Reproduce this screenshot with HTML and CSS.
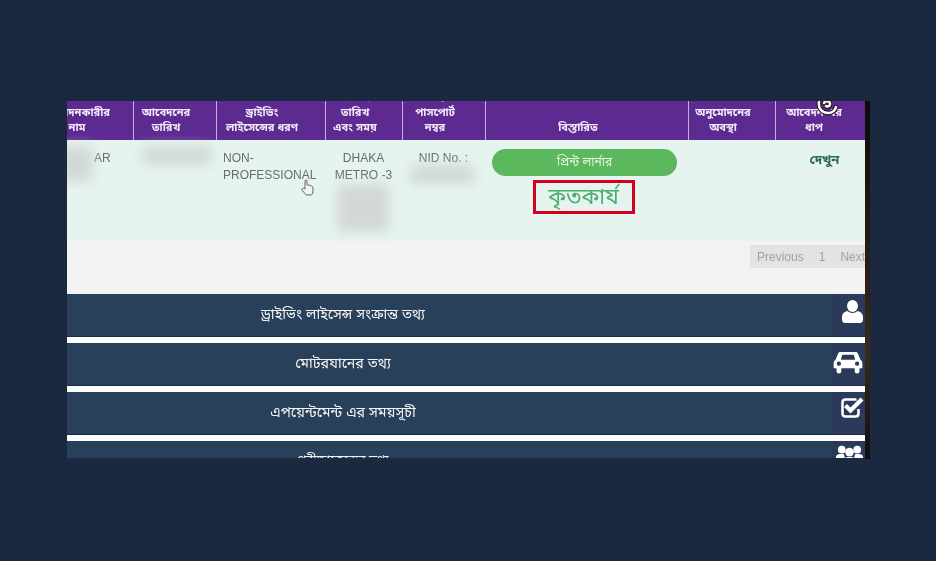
FILE: index.html
```html
<!DOCTYPE html>
<html lang="bn">
<head>
<meta charset="utf-8">
<title>Driving licence application</title>
<link rel="stylesheet" href="styles.css">
</head>
<body>
<main class="frame">
  <div class="table">
    <div class="grid head">
      <div class="th th-first">আবেদনকারীর<br>নাম</div>
      <div class="th">আবেদনের<br>তারিখ</div>
      <div class="th">ড্রাইভিং<br>লাইসেন্সের ধরণ</div>
      <div class="th">পরীক্ষার<br>তারিখ<br>এবং সময়</div>
      <div class="th">এনআইডি /<br>পাসপোর্ট<br>নম্বর</div>
      <div class="th">বিস্তারিত</div>
      <div class="th">অনুমোদনের<br>অবস্থা</div>
      <div class="th">আবেদন-এর<br>ধাপ</div>
    </div>
    <div class="grid row">
      <div class="td td-name"><span class="name-text">AR</span><span class="blur blur-name"></span></div>
      <div class="td"><span class="blur blur-date"></span></div>
      <div class="td td-type">NON-<br>PROFESSIONAL</div>
      <div class="td td-center">DHAKA<br>METRO -3<span class="blur blur-time"></span></div>
      <div class="td td-center">NID No. :<span class="blur blur-nid"></span></div>
      <div class="td td-detail">
        <button class="pill">প্রিন্ট লার্নার</button>
        <div class="success">কৃতকার্য</div>
      </div>
      <div class="td"></div>
      <div class="td td-see">দেখুন</div>
    </div>
  </div>
  <div class="pager-area">
    <div class="pager"><span>Previous</span><span>1</span><span>Next</span></div>
  </div>
  <section class="bar">
    <h2>ড্রাইভিং লাইসেন্স সংক্রান্ত তথ্য</h2>
    <svg class="icon icon-user" width="21" height="23" viewBox="0 0 21 23"><ellipse cx="10.500" cy="6" rx="5.500" ry="6" fill="#fff"/><path d="M0 20v-3c0-3 2.500-5.500 5.500-6 1.200 1.200 3 2 5 2s3.800-.8 5-2c3 .5 5.500 3 5.500 6v3c0 1.500-1 3-3 3H3c-2 0-3-1.500-3-3z" fill="#fff"/></svg>
  </section>
  <section class="bar">
    <h2>মোটরযানের তথ্য</h2>
    <svg class="icon icon-car" width="30" height="23" viewBox="0 0 30 24"><path fill-rule="evenodd" d="M7 1h16c1 0 2 .5 2.500 2L28 9c1.500 1 2 2.500 2 4v5h-3v3a2.500 2.500 0 0 1-5 0v-3H8v3a2.500 2.500 0 0 1-5 0v-3H0v-5c0-1.500.5-3 2-4l2.500-6C5 1.500 6 1 7 1zm2 3L7.500 9h15L21 4zM5.500 11a2 2 0 1 0 0 4.500 2 2 0 0 0 0-4.500zm19 0a2 2 0 1 0 0 4.500 2 2 0 0 0 0-4.500z" fill="#fff"/></svg>
  </section>
  <section class="bar">
    <h2>এপয়েন্টমেন্ট এর সময়সূচী</h2>
    <svg class="icon icon-check" width="23" height="21" viewBox="0 0 23 21"><path d="M17.500 12v4.500c0 2-1 3-3 3h-10c-2 0-3-1-3-3v-11c0-2 1-3 3-3h11" fill="none" stroke="#fff" stroke-width="2.600"/><path d="M4.500 8.500l5 5L21 2" fill="none" stroke="#fff" stroke-width="4.200"/></svg>
  </section>
  <section class="bar bar-last">
    <h2>পরীক্ষাকেন্দ্রের তথ্য</h2>
    <svg class="icon" width="27" height="20" viewBox="0 0 28 20"><g fill="#fff"><circle cx="6" cy="4.500" r="4"/><circle cx="22" cy="4.500" r="4"/><circle cx="14" cy="7" r="4.500"/><path d="M0 12c0-2 2-3 4-3h4c1 2 1 3 1 4-2 .5-3 1.500-3 3H0zM28 12c0-2-2-3-4-3h-4c-1 2-1 3-1 4 2 .5 3 1.500 3 3h6zM8 16c0-2 2-4 4-4h4c2 0 4 2 4 4v4H8z"/></g></svg>
  </section>
  <svg class="overlay-swirl" width="23" height="19" viewBox="0 0 23 19"><g fill="none" stroke-linecap="round"><path d="M3 5c-1 6 3 11 9 11 4 0 7-2 8-6M8 6c2-3 6-2 6 1 0 2-2 3-4 2" stroke="#1a1020" stroke-width="4.500"/><path d="M3 5c-1 6 3 11 9 11 4 0 7-2 8-6M8 6c2-3 6-2 6 1 0 2-2 3-4 2" stroke="#fbf8e8" stroke-width="2.600"/></g></svg>
  <svg class="overlay-hand" width="13" height="17" viewBox="0 0 13 17"><path d="M4 8V2c0-1.500 2-1.500 2 0v4h1c2 0 5 1 5 3v4c0 2-1 3-3 3H6c-2 0-2-2-5-5-1-1 .5-2.500 3-1z" fill="#eef4f1" stroke="#666" stroke-width="1"/></svg>
  <div class="edge"></div>
</main>
</body>
</html>
```
FILE: styles.css
```css
* { box-sizing: border-box; }
html, body { margin: 0; height: 100%; }
body {
  background: #1b2940;
  padding: 101px 66px 102px 67px;
  font-family: "Liberation Sans", "Noto Sans Bengali", "Noto Sans", sans-serif;
}
.frame {
  position: relative;
  width: 803px;
  height: 358px;
  overflow: hidden;
  background: #f3f3f3;
  filter: blur(0.4px);
}
.table { margin-left: -42px; }
.grid {
  display: grid;
  grid-template-columns: 108px 83px 109px 77px 83px 203px 87px 95px;
}
.head { height: 39px; background: #5c2a91; overflow: hidden; }
.th {
  height: 39px;
  display: flex;
  align-items: flex-end;
  justify-content: center;
  text-align: center;
  padding: 0 18px 5px 0;
  font-size: 11px;
  line-height: 15px;
  font-weight: 700;
  color: #f1e9f7;
  border-left: 1px solid #c4aee0;
  white-space: nowrap;
}
.th-first { border-left: 0; padding-right: 4px; }
.row { height: 101px; background: #e6f4f0; }
.td {
  position: relative;
  padding-top: 10px;
  font-size: 12px;
  line-height: 17px;
  color: #6b6b6b;
}
.td-name { padding-left: 69px; }
.td-type { padding-left: 7px; }
.td-center { text-align: center; }
.td-detail {
  display: flex;
  flex-direction: column;
  align-items: center;
  padding: 9px 4px 0 0;
}
.td-see {
  text-align: center;
  font-weight: 700;
  color: #2c6b4e;
  font-size: 13px;
  padding: 11px 0 0 4px;
}
.pill {
  width: 185px;
  height: 27px;
  border: 0;
  border-radius: 14px;
  background: #5cb85c;
  color: #e8f5e6;
  font: inherit;
  font-size: 12px;
}
.success {
  margin: 4px 2px 0 0;
  width: 102px;
  height: 34px;
  border: 3px solid #d2001c;
  color: #4cae6e;
  font-size: 22px;
  line-height: 27px;
  text-align: center;
  white-space: nowrap;
}
.blur { position: absolute; display: block; background: #d2d8d6; filter: blur(6px); }
.blur-name { left: 34px; top: 6px; width: 34px; height: 36px; }
.blur-date { left: 10px; top: 6px; width: 68px; height: 19px; }
.blur-time { left: 12px; top: 44px; width: 52px; height: 48px; }
.blur-nid { left: 8px; top: 25px; width: 64px; height: 19px; }
.pager-area {
  height: 53px;
  display: flex;
  justify-content: flex-end;
  align-items: flex-start;
  padding-top: 4px;
}
.pager {
  width: 120px;
  height: 23px;
  background: #e3e3e3;
  display: flex;
  align-items: center;
  gap: 15px;
  padding-left: 7px;
  font-size: 12px;
  color: #a2a2a2;
  white-space: nowrap;
  overflow: hidden;
}
.bar {
  height: 43px;
  margin-bottom: 6px;
  background: linear-gradient(90deg, #29405a 0%, #29405a 95%, #2b3a5a 95.500%);
  display: grid;
  grid-template-columns: 552px 1fr;
  align-items: center;
  border-bottom: 1px solid #1c2b40;
  box-shadow: 0 6px 0 #fdfdfd;
}
.bar-last { box-shadow: none; overflow: hidden; height: 18px; align-items: start; }
.bar h2 {
  margin: 0;
  text-align: center;
  font-size: 14.2px;
  font-weight: 400;
  color: #f4f4f4;
  white-space: nowrap;
}
.bar-last h2 { font-size: 12px; margin-top: 12px; }
.bar .icon { justify-self: end; margin-right: 7px; }
.bar .icon-user { margin-bottom: 8px; }
.bar .icon-car { margin-bottom: 3px; }
.bar .icon-check { margin-bottom: 12px; margin-right: 6px; }
.bar-last .icon { margin-top: 4px; }
.overlay-swirl { position: absolute; left: 749px; top: -4px; }
.overlay-hand { position: absolute; left: 234px; top: 78px; }
.edge { position: absolute; right: 0; top: 0; bottom: 0; width: 5px; background: linear-gradient(180deg, #0c0a0c 0%, #2a1c16 45%, #3a2a1c 70%, #0e0d12 100%); }
```
